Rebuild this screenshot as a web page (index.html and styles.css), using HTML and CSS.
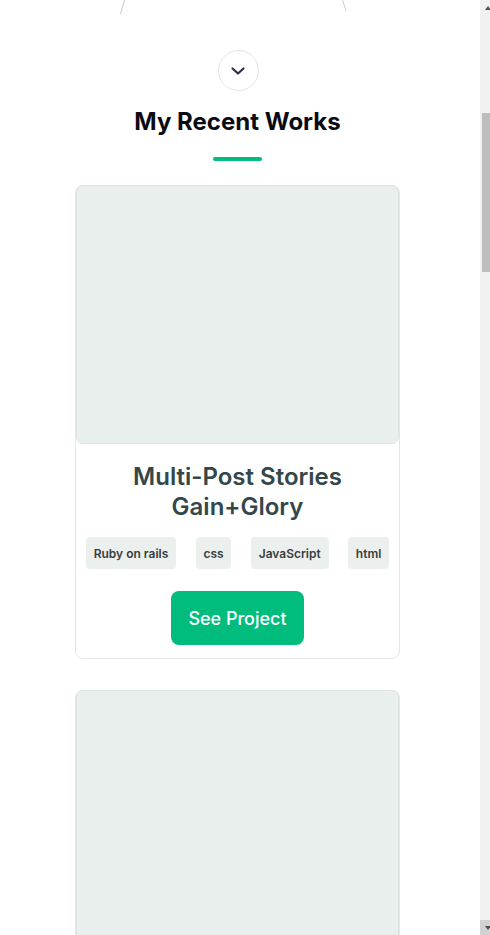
FILE: index.html
```html
<!DOCTYPE html>
<html lang="en">
<head>
<meta charset="utf-8">
<title>My Recent Works</title>
<link rel="stylesheet" href="styles.css">
</head>
<body>
<div class="page">
<section class="hero">
  <svg class="hero-arc" width="475" height="14" viewBox="0 0 475 14" aria-hidden="true">
    <line x1="124.5" y1="0" x2="120.5" y2="14" stroke="#c9cad2" stroke-width="1"/>
    <line x1="342.5" y1="0" x2="346" y2="11" stroke="#c9cad2" stroke-width="1"/>
  </svg>
</section>
<section class="works">
  <a class="scroll-btn" href="#works">
    <svg width="16" height="10" viewBox="0 0 16 10" aria-hidden="true"><path d="M2.5 2.5 L8 7.5 L13.5 2.5" fill="none" stroke="#2b2d52" stroke-width="2.2" stroke-linecap="round" stroke-linejoin="round"/></svg>
  </a>
  <h2 class="works-title" id="works">My Recent Works</h2>
  <span class="works-bar"></span>
  <div class="card-list">
    <article class="card"><div class="card-img"></div><h3 class="card-title">Multi-Post Stories Gain+Glory</h3><ul class="tags"><li class="tag">Ruby on rails</li><li class="tag">css</li><li class="tag">JavaScript</li><li class="tag">html</li></ul><a class="btn" href="#">See Project</a></article>
    <article class="card"><div class="card-img"></div><h3 class="card-title">Multi-Post Stories Gain+Glory</h3><ul class="tags"><li class="tag">Ruby on rails</li><li class="tag">css</li><li class="tag">JavaScript</li><li class="tag">html</li></ul><a class="btn" href="#">See Project</a></article>
    <article class="card"><div class="card-img"></div><h3 class="card-title">Multi-Post Stories Gain+Glory</h3><ul class="tags"><li class="tag">Ruby on rails</li><li class="tag">css</li><li class="tag">JavaScript</li><li class="tag">html</li></ul><a class="btn" href="#">See Project</a></article>
    <article class="card"><div class="card-img"></div><h3 class="card-title">Multi-Post Stories Gain+Glory</h3><ul class="tags"><li class="tag">Ruby on rails</li><li class="tag">css</li><li class="tag">JavaScript</li><li class="tag">html</li></ul><a class="btn" href="#">See Project</a></article>
    <article class="card"><div class="card-img"></div><h3 class="card-title">Multi-Post Stories Gain+Glory</h3><ul class="tags"><li class="tag">Ruby on rails</li><li class="tag">css</li><li class="tag">JavaScript</li><li class="tag">html</li></ul><a class="btn" href="#">See Project</a></article>
    <article class="card"><div class="card-img"></div><h3 class="card-title">Multi-Post Stories Gain+Glory</h3><ul class="tags"><li class="tag">Ruby on rails</li><li class="tag">css</li><li class="tag">JavaScript</li><li class="tag">html</li></ul><a class="btn" href="#">See Project</a></article>
    <article class="card"><div class="card-img"></div><h3 class="card-title">Multi-Post Stories Gain+Glory</h3><ul class="tags"><li class="tag">Ruby on rails</li><li class="tag">css</li><li class="tag">JavaScript</li><li class="tag">html</li></ul><a class="btn" href="#">See Project</a></article>
    <article class="card"><div class="card-img"></div><h3 class="card-title">Multi-Post Stories Gain+Glory</h3><ul class="tags"><li class="tag">Ruby on rails</li><li class="tag">css</li><li class="tag">JavaScript</li><li class="tag">html</li></ul><a class="btn" href="#">See Project</a></article>
    <article class="card"><div class="card-img"></div><h3 class="card-title">Multi-Post Stories Gain+Glory</h3><ul class="tags"><li class="tag">Ruby on rails</li><li class="tag">css</li><li class="tag">JavaScript</li><li class="tag">html</li></ul><a class="btn" href="#">See Project</a></article>
  </div>
</section>
</div>
<div class="scrollbar" aria-hidden="true">
  <div class="sb-btn sb-up"><span class="sb-arrow-up"></span></div>
  <div class="sb-track"><div class="sb-thumb"></div></div>
  <div class="sb-btn sb-down"><span class="sb-arrow-down"></span></div>
</div>
<script src="script.js"></script>
</body>
</html>
```

FILE: styles.css
```css
* { box-sizing: border-box; }
html { scroll-behavior: auto; }
body {
  margin: 0;
  background: #ffffff;
  font-family: Inter, "Noto Sans", "Liberation Sans", sans-serif;
  color: #000;
}
.page {
  width: 475px;
}
.hero {
  height: 590px;
  display: flex;
  flex-direction: column;
  justify-content: flex-end;
}
.hero-arc { display: block; }
.works {
  display: flex;
  flex-direction: column;
  align-items: center;
  padding: 36px 0 48px;
}
.scroll-btn {
  width: 41px;
  height: 41px;
  border: 1px solid #e3e3ea;
  border-radius: 50%;
  display: flex;
  align-items: center;
  justify-content: center;
  margin-left: 1px;
}
.scroll-btn svg { display: block; margin-top: 1px; }
.works-title {
  margin: 16px 0 0;
  font-size: 24px;
  line-height: 30px;
  font-weight: 700;
  color: #0b0b12;
}
.works-bar {
  display: block;
  width: 49px;
  height: 4px;
  border-radius: 2px;
  background: #00bd7e;
  margin-top: 20px;
}
.card-list {
  margin-top: 24px;
  display: flex;
  flex-direction: column;
  gap: 31px;
}
.card {
  width: 325px;
  border: 1px solid #e3e8e7;
  border-radius: 8px;
  display: flex;
  flex-direction: column;
  align-items: center;
  padding-bottom: 13px;
}
.card-img {
  width: 100%;
  height: 259px;
  background: #e9efed;
  border: 1px solid #dbe4e1;
  border-radius: 7px;
  margin-top: -1px;
}
.card-title {
  margin: 18px 0 0;
  font-size: 24px;
  line-height: 30px;
  font-weight: 600;
  color: #33474a;
  text-align: center;
  width: 240px;
}
.tags {
  list-style: none;
  margin: 15px 0 0;
  padding: 0;
  display: flex;
  gap: 19.5px;
}
.tag {
  height: 32px;
  padding: 0 7.8px;
  display: flex;
  align-items: center;
  background: #ebf0ef;
  border-radius: 4px;
  font-size: 12px;
  font-weight: 600;
  color: #3a3d3c;
}
.btn {
  margin-top: 22px;
  height: 54px;
  padding: 0 17.5px;
  display: flex;
  align-items: center;
  background: #00bd7e;
  color: #ffffff;
  border-radius: 8px;
  font-size: 18px;
  font-weight: 500;
  text-decoration: none;
}

/* drawn scrollbar, clipped at the window edge */
.scrollbar {
  position: fixed;
  top: 0;
  right: 0;
  width: 10px;
  height: 100vh;
  overflow: hidden;
  background: #f1f1f1;
  display: flex;
  flex-direction: column;
}
.sb-btn {
  width: 15px;
  height: 15px;
  flex: none;
  display: flex;
  align-items: center;
  justify-content: center;
}
.sb-down { background: #d2d2d2; }
.sb-arrow-up,
.sb-arrow-down {
  width: 0;
  height: 0;
  border-left: 3.5px solid transparent;
  border-right: 3.5px solid transparent;
}
.sb-arrow-up { border-bottom: 4px solid #505050; margin-top: 1px; }
.sb-arrow-down { border-top: 4px solid #505050; margin-top: 1px; }
.sb-track {
  flex: 1;
  padding-top: 98px;
}
.sb-thumb {
  width: 11px;
  height: 159px;
  margin-left: 2px;
  background: #bdbdbd;
}
```

FILE: script.js
```js
window.scrollTo(0, 576);
```
